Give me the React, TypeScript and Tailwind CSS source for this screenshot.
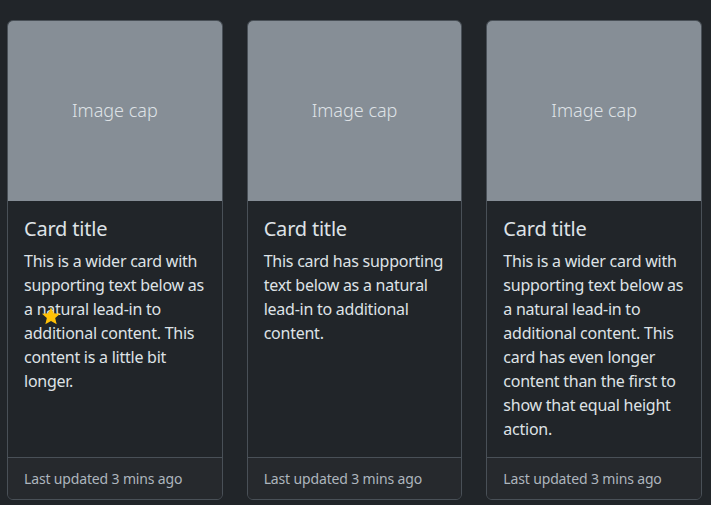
import React from "react";

const cards = [
  {
    text: "This is a wider card with supporting text below as a natural lead-in to additional content. This content is a little bit longer.",
  },
  {
    text: "This card has supporting text below as a natural lead-in to additional content.",
  },
  {
    text: "This is a wider card with supporting text below as a natural lead-in to additional content. This card has even longer content than the first to show that equal height action.",
  },
];

export default function App() {
  return (
    <div
      className="relative min-h-[505px] w-full bg-[#212529] text-[#dee2e6]"
      style={{ fontFamily: '"Noto Sans", "Noto Sans CJK KR", sans-serif' }}
    >
      <div className="flex gap-6 pl-[7px] pr-[9px] pt-[20px]">
        {cards.map((c, i) => (
          <div
            key={i}
            className="flex flex-1 flex-col overflow-hidden rounded-[6px] border border-[#495057] bg-[#212529]"
          >
            <div className="flex h-[180px] items-center justify-center bg-[#868e96] pb-[2px] text-[18px] font-light text-[#dee2e6]">
              Image cap
            </div>
            <div className="flex h-[256px] flex-col p-4">
              <h5 className="mb-2 text-[20px] font-normal leading-[24px] tracking-[-0.2px] text-[#dee2e6]">Card title</h5>
              <p className="text-[16px] leading-[24px] tracking-[-0.25px] text-[#dee2e6]">{c.text}</p>
            </div>
            <div className="border-t border-[#495057] bg-[#26292d] px-4 py-2 text-[16px] leading-[24px]">
              <small className="text-[14px] tracking-[-0.15px] text-[#adb5bd]">Last updated 3 mins ago</small>
            </div>
          </div>
        ))}
      </div>
      <svg
        className="absolute left-[41px] top-[306px]"
        width="20"
        height="20"
        viewBox="0 0 24 24"
      >
        <path
          d="M12 1.5l3.1 7.2 7.8.6-5.9 5.1 1.8 7.6L12 17.9 5.2 22l1.8-7.6L1.1 9.3l7.8-.6z"
          fill="#ffc107"
        />
      </svg>
    </div>
  );
}
